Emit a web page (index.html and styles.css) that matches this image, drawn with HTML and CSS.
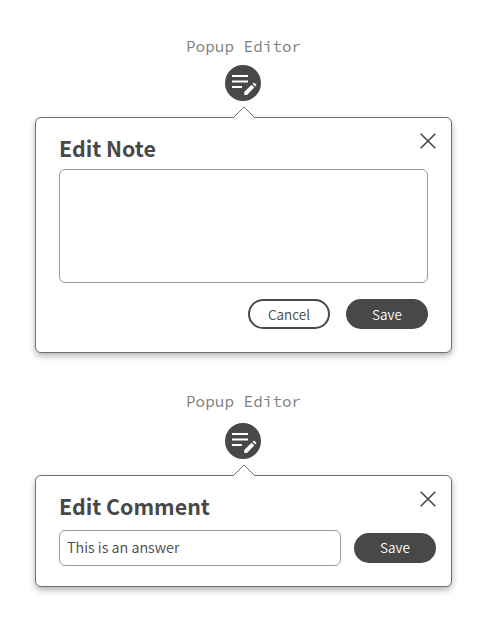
FILE: index.html
```html
<!DOCTYPE html>
<html lang="en">
<head>
<meta charset="utf-8">
<title>Popup Editor</title>
<link rel="stylesheet" href="styles.css">
</head>
<body>
<svg class="defs" aria-hidden="true">
  <symbol id="edit" viewBox="0 0 36 36">
    <circle cx="18" cy="18" r="18" fill="#484848"/>
    <path d="M7 11H23M7 16.5H23M7 22H17" stroke="#fff" stroke-width="2" fill="none"/>
    <path d="M19.2 30V27L26.6 19.7L29.3 22.4L22 30ZM27.5 18.8L28.4 17.9Q29 17.4 29.6 17.9L31.1 19.4Q31.6 20 31.1 20.6L30.2 21.5Z" fill="#fff"/>
  </symbol>
  <symbol id="close" viewBox="0 0 16 16">
    <path d="M.7 .7L15.3 15.3M15.3 .7L.7 15.3" stroke="#484848" stroke-width="1.6" fill="none"/>
  </symbol>
  <symbol id="pointer" viewBox="0 0 24 12">
    <path d="M0 12V11.5H1.5L12 .9L22.5 11.5H24V12Z" fill="#fff"/>
    <path d="M0 11.5H1.5L12 .9L22.5 11.5H24" stroke="#707070" fill="none"/>
  </symbol>
</svg>
<main>
  <section class="editor">
    <p class="label">Popup Editor</p>
    <svg class="edit-icon"><use href="#edit"/></svg>
    <div class="popup popup-note">
      <svg class="pointer"><use href="#pointer"/></svg>
      <header><h2>Edit Note</h2><button class="close" aria-label="Close"><svg><use href="#close"/></svg></button></header>
      <textarea class="field"></textarea>
      <div class="actions">
        <button class="btn outline">Cancel</button>
        <button class="btn">Save</button>
      </div>
    </div>
  </section>
  <section class="editor second">
    <p class="label">Popup Editor</p>
    <svg class="edit-icon"><use href="#edit"/></svg>
    <div class="popup popup-comment">
      <svg class="pointer"><use href="#pointer"/></svg>
      <header><h2>Edit Comment</h2><button class="close" aria-label="Close"><svg><use href="#close"/></svg></button></header>
      <div class="row">
        <input class="field" type="text" value="This is an answer">
        <button class="btn">Save</button>
      </div>
    </div>
  </section>
</main>
</body>
</html>
```

FILE: styles.css
```css
* { box-sizing: border-box; }
body {
  margin: 0;
  min-height: 637px;
  background: #fff;
  color: #484848;
  font-family: "Noto Sans CJK SC", "Noto Sans", sans-serif;
}
.defs { display: none; }
main { padding-top: 36px; }
.editor {
  display: flex;
  flex-direction: column;
  align-items: flex-start;
}
.second { margin-top: 38px; }
.label {
  margin: 0 0 9px 186px;
  font: 16px/20px "Source Code Pro", "Noto Sans Mono CJK SC", "Liberation Mono", monospace;
  color: #808080;
}
.second .label { margin-bottom: 12px; }
.edit-icon {
  display: block;
  width: 36px;
  height: 36px;
  margin-left: 225px;
}
.popup {
  position: relative;
  width: 417px;
  margin: 16px 0 0 35px;
  padding: 15px 23px 23px;
  border: 1px solid #707070;
  border-radius: 6px;
  background: #fff;
  box-shadow: 0 3px 6px rgba(0, 0, 0, .3);
}
.popup-note { height: 236px; }
.popup-comment { height: 112px; }
.pointer {
  position: absolute;
  left: 196px;
  top: -12px;
  width: 24px;
  height: 12px;
}
header {
  display: flex;
  justify-content: space-between;
  height: 36px;
  margin-right: -8px;
}
h2 {
  margin: 0;
  font-size: 21.4px;
  line-height: 30px;
  font-weight: 700;
}
.close {
  width: 16px;
  height: 16px;
  padding: 0;
  border: 0;
  background: none;
}
.close svg { display: block; width: 16px; height: 16px; }
.field {
  display: block;
  border: 1px solid #979797;
  border-radius: 6px;
  background: #fff;
  color: inherit;
  font: 350 14.35px/24px "Noto Sans CJK SC", "Noto Sans", sans-serif;
  outline: none;
}
textarea.field {
  width: 369px;
  height: 114px;
  padding: 7px;
  resize: none;
}
.actions {
  display: flex;
  justify-content: flex-end;
  gap: 16px;
  margin-top: 16px;
}
.btn {
  width: 82px;
  height: 30px;
  padding: 0;
  border: 2px solid #484848;
  border-radius: 15px;
  background: #484848;
  color: #fff;
  font: 350 13.5px/26px "Noto Sans CJK SC", "Noto Sans", sans-serif;
}
.btn.outline { background: #fff; color: #484848; }
.row {
  display: flex;
  align-items: center;
  gap: 13px;
  width: 377px;
  margin-top: 3px;
}
.row .field { width: 282px; height: 36px; padding: 0 7px 3px; }
.row .btn { padding-bottom: 1px; line-height: 25px; }
```
